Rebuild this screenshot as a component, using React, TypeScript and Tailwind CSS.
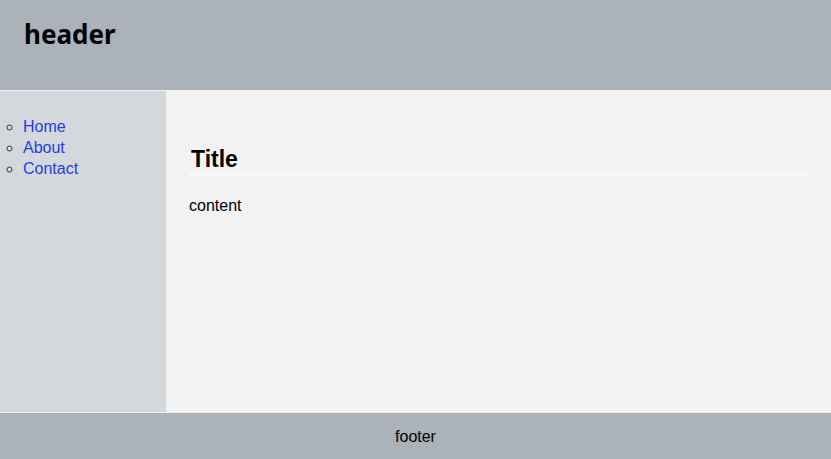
export default function App() {
  return (
    <div
      className="grid h-[459px] w-[831px] grid-cols-[166px_1fr] grid-rows-[90px_1fr_46px] gap-px bg-[#eceef0] text-black"
      style={{ fontFamily: '"Liberation Sans", Arial, sans-serif' }}
    >
      <header className="col-span-2 bg-[#abb2b9] pl-6 pt-[16px]">
        <h1
          className="text-[26px] font-bold leading-[36px]"
          style={{ fontFamily: '"Noto Sans", sans-serif' }}
        >
          header
        </h1>
      </header>
      <nav className="bg-[#d4d7db] pt-[25px]">
        <ul className="list-[circle] pl-[23px] text-[16px] leading-[21px] marker:text-[#333]">
          <li>
            <a href="#" className="text-[#1f3fe0]">Home</a>
          </li>
          <li>
            <a href="#" className="text-[#1f3fe0]">About</a>
          </li>
          <li>
            <a href="#" className="text-[#1f3fe0]">Contact</a>
          </li>
        </ul>
      </nav>
      <main className="bg-[#f2f2f2] pl-[22px] pr-[23px] pt-[55px]">
        <h2 className="border-b-4 border-[#f7f7f7] pl-[2px] text-[23px] font-bold leading-[26px]">
          Title
        </h2>
        <p className="mt-[20px] text-[16px] leading-[19px]">content</p>
      </main>
      <footer className="col-span-2 flex items-center justify-center bg-[#abb2b9] pt-[2px] text-[16px]">
        footer
      </footer>
    </div>
  );
}
